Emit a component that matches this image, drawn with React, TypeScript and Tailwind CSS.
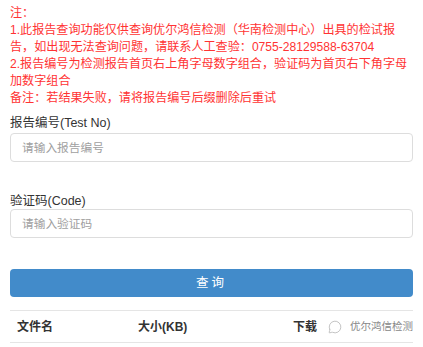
import { MessageCircle } from 'lucide-react'

const font = { fontFamily: "'Liberation Sans', 'Noto Sans CJK SC', sans-serif" }

export default function App() {
  return (
    <div className="w-[423px] h-[347px] bg-white overflow-hidden relative" style={font}>
      <div className="px-[10px]">
        <div className="pt-[5px] text-[12.1px] leading-[17px] text-[#ff3333] whitespace-nowrap">
          注：
          <br />
          1.此报告查询功能仅供查询优尔鸿信检测（华南检测中心）出具的检试报
          <br />
          告，如出现无法查询问题，请联系人工查验：0755-28129588-63704
          <br />
          2.报告编号为检测报告首页右上角字母数字组合，验证码为首页右下角字母
          <br />
          加数字组合
          <br />
          备注：若结果失败，请将报告编号后缀删除后重试
        </div>

        <div className="mt-[7px] text-[12.5px] leading-[18px] text-[#333]">报告编号(Test No)</div>
        <input
          placeholder="请输入报告编号"
          className="mt-[1px] block w-full h-[29px] px-[11px] text-[11.7px] border border-[#ddd] rounded-[4px] placeholder:text-[#a0a0a0] outline-none"
          style={font}
        />

        <div className="mt-[30px] text-[12.5px] leading-[18px] text-[#333]">验证码(Code)</div>
        <input
          placeholder="请输入验证码"
          className="mt-[-1px] block w-full h-[29px] px-[11px] text-[11.7px] border border-[#ddd] rounded-[4px] placeholder:text-[#a0a0a0] outline-none"
          style={font}
        />

        <button className="mt-[31px] block w-full h-[28px] rounded-[4px] bg-[#428bca] text-white text-[12.5px] tracking-[3px]">
          查询
        </button>

        <div className="mt-[13px] border-t border-b border-[#e5e5e5] h-[33px] flex items-center text-[12px] font-bold text-[#333]">
          <div className="pl-[7px] w-[128px]">文件名</div>
          <div className="w-[155px]">大小(KB)</div>
          <div>下载</div>
        </div>
      </div>

      <div className="absolute left-[326px] top-[314px] h-[26px] pr-[12px] pl-[2px] bg-white flex items-center gap-[8px] text-[10.5px] text-[#888] whitespace-nowrap">
        <MessageCircle size={14} strokeWidth={1.2} className="text-[#aaa]" />
        <span>优尔鸿信检测</span>
      </div>
    </div>
  )
}
